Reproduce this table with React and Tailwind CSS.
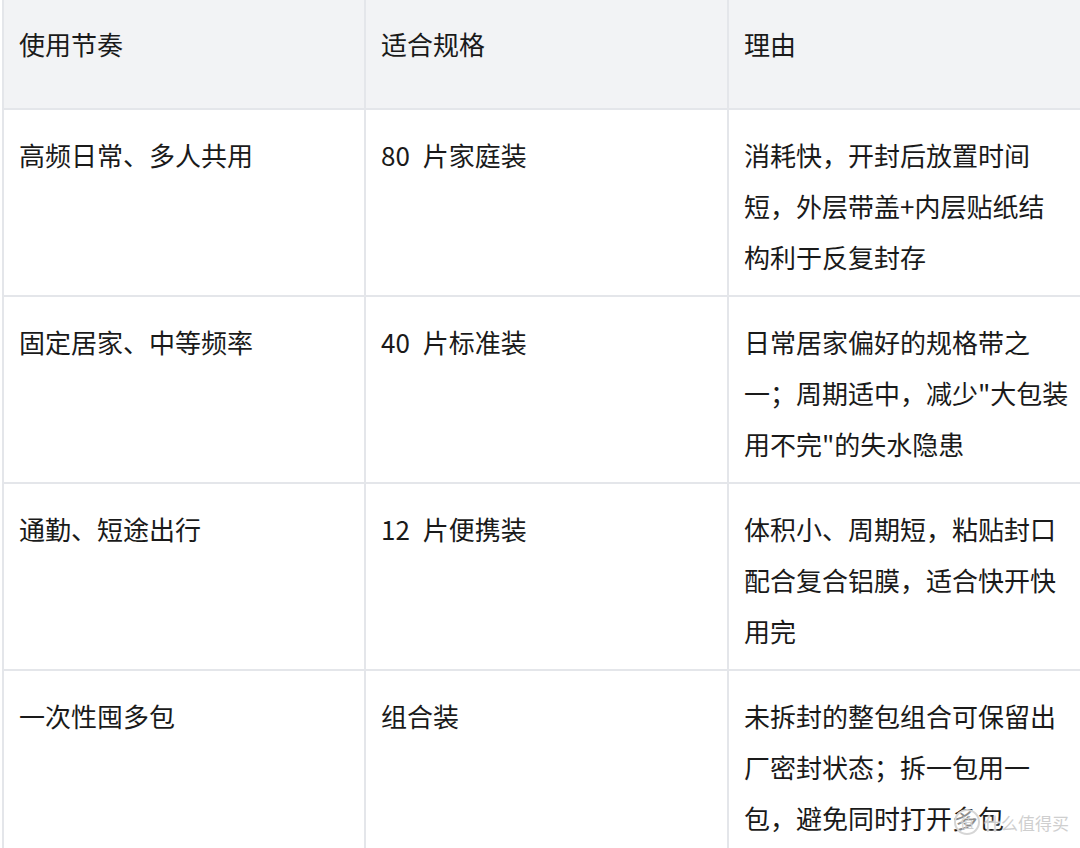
const rows = [
  {
    use: "高频日常、多人共用",
    spec: "80\u2002片家庭装",
    reason: ["消耗快，开封后放置时间", "短，外层带盖+内层贴纸结", "构利于反复封存"],
  },
  {
    use: "固定居家、中等频率",
    spec: "40\u2002片标准装",
    reason: ["日常居家偏好的规格带之", "一；周期适中，减少\"大包装", "用不完\"的失水隐患"],
  },
  {
    use: "通勤、短途出行",
    spec: "12\u2002片便携装",
    reason: ["体积小、周期短，粘贴封口", "配合复合铝膜，适合快开快", "用完"],
  },
  {
    use: "一次性囤多包",
    spec: "组合装",
    reason: ["未拆封的整包组合可保留出", "厂密封状态；拆一包用一", "包，避免同时打开多包"],
  },
];

const cell = "border-r-2 border-b-2 border-[#e4e6ea] pl-[15px] leading-[51px]";

const App = () => {
  return (
    <div
      className="relative w-[1080px] h-[848px] overflow-hidden bg-white text-[26px] text-[#1a1a1a]"
      style={{ fontFamily: '"Noto Sans CJK SC", "Noto Sans", sans-serif' }}
    >
      <div className="ml-[2px] border-l-2 border-[#e4e6ea] grid grid-cols-[362px_363px_400px]">
        <div className={`${cell} bg-[#f2f3f5] pt-[18px] pb-[39px]`}>使用节奏</div>
        <div className={`${cell} bg-[#f2f3f5] pt-[18px] pb-[39px]`}>适合规格</div>
        <div className={`${cell} bg-[#f2f3f5] pt-[18px] pb-[39px]`}>理由</div>

        {rows.map((r) => (
          <div key={r.use} className="contents">
            <div className={`${cell} pt-[19px] pb-[13px]`}>{r.use}</div>
            <div className={`${cell} pt-[19px] pb-[13px]`}>{r.spec}</div>
            <div className={`${cell} pt-[19px] pb-[13px] whitespace-nowrap`}>
              {r.reason.map((line) => (
                <div key={line}>{line}</div>
              ))}
            </div>
          </div>
        ))}
      </div>

      {/* watermark */}
      <div className="absolute left-[954px] top-[809px] flex items-center gap-[4px] whitespace-nowrap text-[#cfcfcf]">
        <div className="w-[26px] h-[26px] rounded-full border-2 border-[#d6d6d6] bg-white/50 flex items-center justify-center text-[14px] leading-none">
          值
        </div>
        <span className="text-[17px] leading-none" style={{ textShadow: "0 0 2px #fff, 0 0 2px #fff" }}>
          什么值得买
        </span>
      </div>
    </div>
  );
};

export default App;
